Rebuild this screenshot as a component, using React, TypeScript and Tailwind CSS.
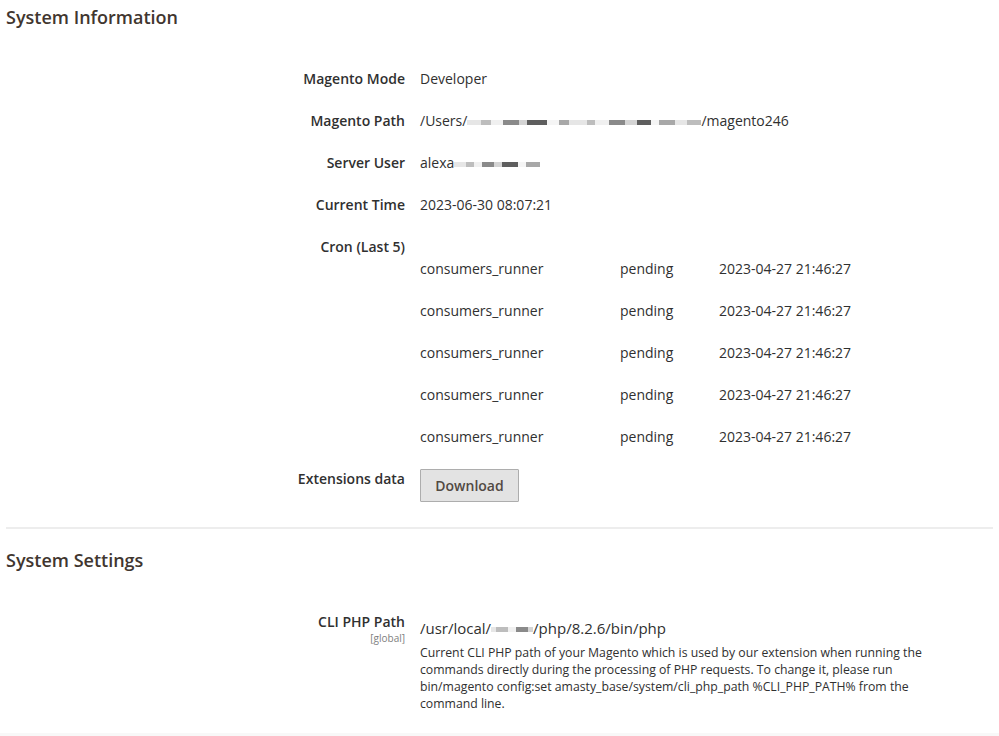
import React from "react";

const font = { fontFamily: '"Open Sans", "Noto Sans", sans-serif' };

function Redacted({ widths }: { widths: number[] }) {
  const shades = ["bg-[#e6e6e6]", "bg-[#bdbdbd]", "bg-[#f0f0f0]", "bg-[#8a8a8a]", "bg-[#d4d4d4]", "bg-[#5e5e5e]", "bg-[#f5f5f5]", "bg-[#a8a8a8]"];
  return (
    <span className="inline-flex items-center h-[14px] align-middle">
      {widths.map((w, i) => (
        <span
          key={i}
          className={`inline-block h-[5px] ${shades[i % shades.length]}`}
          style={{ width: w }}
        />
      ))}
    </span>
  );
}

function Row({ label, children }: { label: string; children?: React.ReactNode }) {
  return (
    <div className="flex">
      <div className="w-[405px] shrink-0 text-right text-[14px] font-semibold text-[#303030] leading-[20px]">
        {label}
      </div>
      <div className="pl-[15px] text-[14px] text-[#303030] leading-[20px]">{children}</div>
    </div>
  );
}

const cron = Array.from({ length: 5 }, () => ({
  job: "consumers_runner",
  status: "pending",
  time: "2023-04-27 21:46:27",
}));

export default function App() {
  return (
    <div className="w-[999px] h-[736px] bg-white overflow-hidden flex flex-col" style={font}>
      <div className="px-[6px] pt-[4px]">
        <h2 className="text-[18px] font-semibold text-[#41362f] leading-[26px]">System Information</h2>
      </div>
      <div className="mt-[39px] flex flex-col gap-[22px]">
        <Row label="Magento Mode">Developer</Row>
        <Row label="Magento Path">
          /Users/
          <Redacted widths={[14, 10, 12, 16, 8, 20, 12, 10, 18, 8, 14, 16, 12, 14, 8, 16, 12, 14]} />
          /magento246
        </Row>
        <Row label="Server User">
          alexa
          <Redacted widths={[12, 8, 8, 12, 8, 16, 8, 14]} />
        </Row>
        <Row label="Current Time">2023-06-30 08:07:21</Row>
        <div>
          <Row label="Cron (Last 5)" />
          <div className="ml-[420px] mt-[2px] flex flex-col gap-[22px]">
            {cron.map((c, i) => (
              <div key={i} className="flex text-[14px] text-[#303030] leading-[20px]">
                <div className="w-[200px]">{c.job}</div>
                <div className="w-[99px]">{c.status}</div>
                <div>{c.time}</div>
              </div>
            ))}
          </div>
        </div>
        <div className="flex items-start">
          <div className="w-[405px] shrink-0 text-right text-[14px] font-semibold text-[#303030] leading-[20px]">
            Extensions data
          </div>
          <div className="pl-[15px] flex">
            <button className="h-[33px] w-[99px] bg-[#e3e3e3] border border-[#adadad] rounded-[1px] text-[14px] font-semibold text-[#514943]">
              Download
            </button>
          </div>
        </div>
      </div>
      <div className="mx-[6px] mt-[25px] h-[2px] bg-[#ededed]" />
      <div className="px-[6px] pt-[18px]">
        <h2 className="text-[18px] font-semibold text-[#41362f] leading-[26px]">System Settings</h2>
      </div>
      <div className="mt-[39px] flex">
        <div className="w-[405px] shrink-0 text-right">
          <div className="text-[14px] font-semibold text-[#303030] leading-[20px]">CLI PHP Path</div>
          <div className="text-[10px] text-[#808080] leading-[12px]">[global]</div>
        </div>
        <div className="pl-[15px] pt-[6px] w-[525px]">
          <div className="text-[15px] text-[#303030] leading-[20px]">
            /usr/local/
            <Redacted widths={[5, 12, 8, 12, 5]} />
            /php/8.2.6/bin/php
          </div>
          <div className="mt-[6px] text-[12.25px] text-[#303030] leading-[17px]">
            Current CLI PHP path of your Magento which is used by our extension when running the commands directly
            during the processing of PHP requests. To change it, please run bin/magento config:set
            amasty_base/system/cli_php_path %CLI_PHP_PATH% from the command line.
          </div>
        </div>
      </div>
      <div className="mt-auto h-[3px] bg-[#f8f8f8]" />
    </div>
  );
}
